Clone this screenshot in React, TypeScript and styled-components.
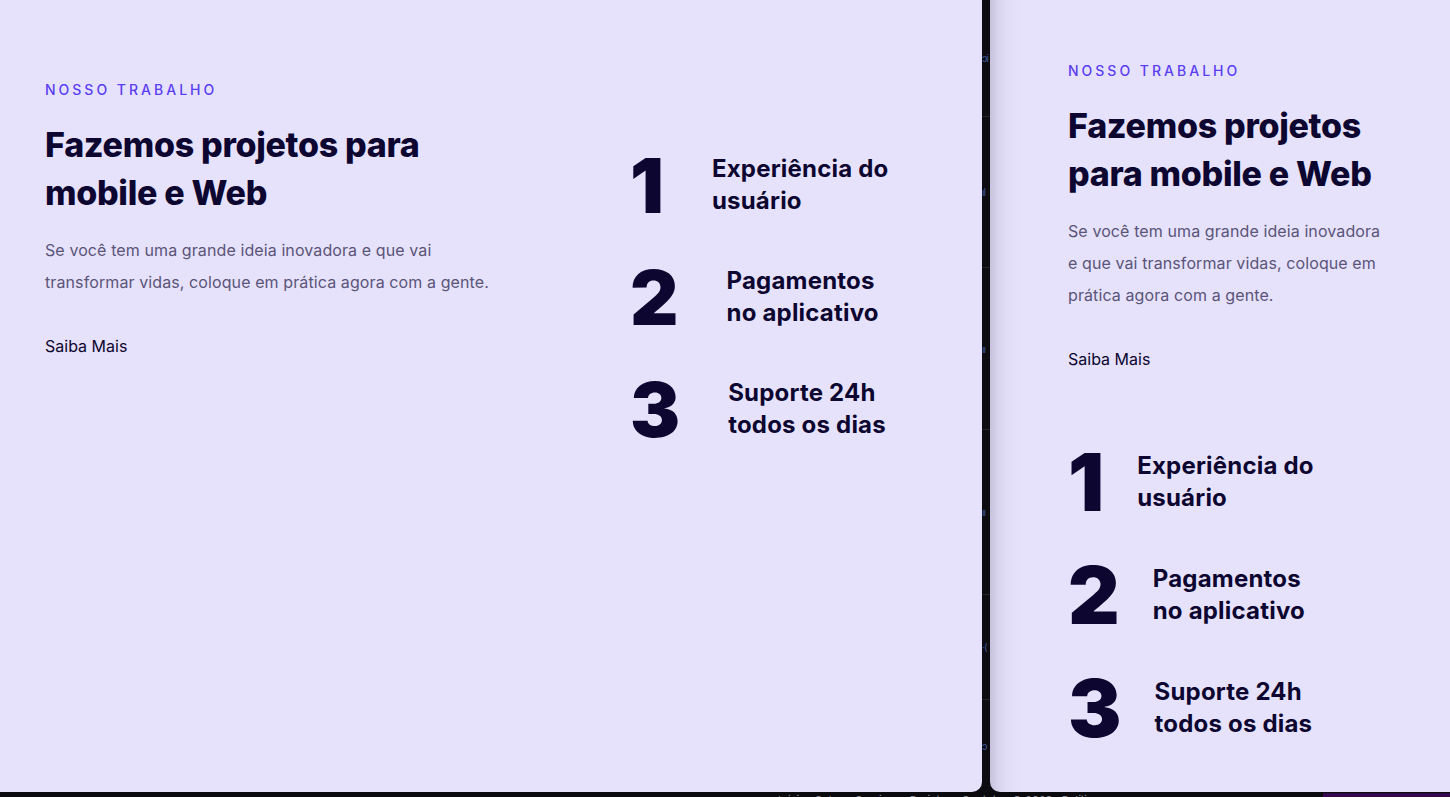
import React from "react";
import styled, { createGlobalStyle, css } from "styled-components";

const Global = createGlobalStyle`
  html, body { margin: 0; padding: 0; background: #0b0b0f; }
  body { font-family: Inter, "Noto Sans", sans-serif; overflow: hidden; }
  * { box-sizing: border-box; }
`;

type Variant = "wide" | "narrow";

const Screen = styled.div`
  width: 1450px;
  height: 797px;
  display: flex;
  flex-direction: column;
  overflow: hidden;
  background: #0b0b0f;
`;

const Stage = styled.div`
  display: flex;
  height: 792px;
`;

const Panel = styled.section<{ $variant: Variant }>`
  height: 100%;
  color: #0c0630;
  ${(p) =>
    p.$variant === "wide"
      ? css`
          background: #e6e2fb;
          width: 982px;
          flex: none;
          border-bottom-right-radius: 10px;
          padding: 80px 45px 0;
          display: grid;
          grid-template-columns: 585px 1fr;
          align-items: start;
        `
      : css`
          flex: 1;
          border-bottom-left-radius: 10px;
          padding: 61px 0 0 78px;
          display: flex;
          flex-direction: column;
          background: linear-gradient(
            to right,
            #c6c2db 0px,
            #d8d4ee 8px,
            #e2def8 18px,
            #e6e2fb 30px
          );
        `}
`;

const Gutter = styled.div`
  width: 8px;
  flex: none;
  background: #0c0c11;
  overflow: hidden;
  display: flex;
  flex-direction: column;
`;

const GutterRow = styled.div<{ $h: number; $last?: boolean }>`
  height: ${(p) => p.$h}px;
  flex: none;
  display: flex;
  align-items: center;
  border-bottom: ${(p) => (p.$last ? "none" : "1px solid #25252e")};
`;

const GutterText = styled.span`
  font-size: 10px;
  line-height: 14px;
  letter-spacing: -1px;
  color: #3e5898;
  white-space: nowrap;
`;

const Intro = styled.div<{ $variant: Variant }>`
  display: flex;
  flex-direction: column;
  max-width: ${(p) => (p.$variant === "wide" ? "470px" : "320px")};
`;

const Eyebrow = styled.span`
  font-size: 14px;
  line-height: 20px;
  letter-spacing: 3px;
  text-transform: uppercase;
  color: #5a3ef2;
  font-weight: 500;
`;

const Title = styled.h2<{ $variant: Variant }>`
  margin: 21px 0 0;
  font-size: 34px;
  line-height: 48px;
  font-weight: 800;
  letter-spacing: -0.3px;
  color: #0c0630;
  max-width: ${(p) => (p.$variant === "wide" ? "430px" : "320px")};
`;

const Body = styled.p`
  margin: 17px 0 0;
  font-size: 16px;
  line-height: 32px;
  letter-spacing: 0.1px;
  color: #5a5479;
`;

const MoreLink = styled.a`
  margin-top: 36px;
  font-size: 16px;
  line-height: 24px;
  color: #0c0630;
  text-decoration: none;
  align-self: flex-start;
`;

const Stats = styled.ul<{ $variant: Variant }>`
  list-style: none;
  margin: ${(p) => (p.$variant === "wide" ? "65px 0 0" : "69px 0 0")};
  padding: 0;
  display: flex;
  flex-direction: column;
  gap: ${(p) => (p.$variant === "wide" ? "32px" : "29px")};
`;

const Stat = styled.li<{ $variant: Variant }>`
  display: flex;
  align-items: center;
  gap: ${(p) => (p.$variant === "wide" ? "48px" : "33px")};
  height: ${(p) => (p.$variant === "wide" ? "80px" : "84px")};
`;

const StatNumber = styled.span<{ $variant: Variant }>`
  font-size: ${(p) => (p.$variant === "wide" ? "75px" : "80px")};
  line-height: 1;
  font-weight: 900;
  color: #0c0630;
`;

const StatLabel = styled.span`
  font-size: 24px;
  line-height: 32px;
  font-weight: 700;
  letter-spacing: 0.2px;
  color: #0c0630;
`;

const Footer = styled.footer`
  height: 5px;
  display: flex;
  overflow: hidden;
  background: #0b0b0f;
`;

const FooterText = styled.div`
  flex: 1;
  padding-left: 778px;
  margin-top: 2px;
  font-size: 11px;
  line-height: 12px;
  color: #8d8d98;
  white-space: nowrap;
  overflow: hidden;
`;

const FooterAccent = styled.div`
  width: 127px;
  flex: none;
  margin-top: 1px;
  background: #34094f;
`;

const stats = [
  { n: "1", lines: ["Experiência do", "usuário"] },
  { n: "2", lines: ["Pagamentos", "no aplicativo"] },
  { n: "3", lines: ["Suporte 24h", "todos os dias"] },
];

const gutterRows = [
  { h: 117, t: "ɔi" },
  { h: 151, t: "ıl" },
  { h: 162, t: "ıı" },
  { h: 165, t: "ıı" },
  { h: 105, t: "·(" },
  { h: 92, t: "ɔ" },
];

function Section({ variant }: { variant: Variant }) {
  return (
    <Panel $variant={variant}>
      <Intro $variant={variant}>
        <Eyebrow>Nosso trabalho</Eyebrow>
        <Title $variant={variant}>Fazemos projetos para mobile e Web</Title>
        <Body>
          Se você tem uma grande ideia inovadora e que vai transformar vidas,
          coloque em prática agora com a gente.
        </Body>
        <MoreLink href="#">Saiba Mais</MoreLink>
      </Intro>
      <Stats $variant={variant}>
        {stats.map((s) => (
          <Stat key={s.n} $variant={variant}>
            <StatNumber $variant={variant}>{s.n}</StatNumber>
            <StatLabel>
              {s.lines[0]}
              <br />
              {s.lines[1]}
            </StatLabel>
          </Stat>
        ))}
      </Stats>
    </Panel>
  );
}

export default function App() {
  return (
    <>
      <Global />
      <Screen>
        <Stage>
          <Section variant="wide" />
          <Gutter>
            {gutterRows.map((r, i) => (
              <GutterRow key={i} $h={r.h} $last={i === gutterRows.length - 1}>
                <GutterText>{r.t}</GutterText>
              </GutterRow>
            ))}
          </Gutter>
          <Section variant="narrow" />
        </Stage>
        <Footer>
          <FooterText>
            Início · Sobre · Serviços · Projetos · Contato · © 2023 · Política
          </FooterText>
          <FooterAccent />
        </Footer>
      </Screen>
    </>
  );
}
